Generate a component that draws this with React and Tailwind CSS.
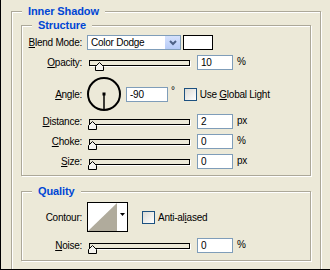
import React from 'react';

const font = { fontFamily: '"Liberation Sans", Arial, sans-serif' };

function U({ children }) {
  return <span className="underline underline-offset-[1px]">{children}</span>;
}

function Label({ children }) {
  return <div className="w-[60px] shrink-0 text-right whitespace-nowrap">{children}</div>;
}

function Thumb() {
  return (
    <svg width="9" height="9" viewBox="0 0 9 9" className="block">
      <path d="M4.5 0.5 L8.5 4.5 L8.5 8.5 L0.5 8.5 L0.5 4.5 Z" fill="#f4f3ee" stroke="#000" strokeWidth="1" />
    </svg>
  );
}

function Slider({ pos }) {
  return (
    <div className="relative w-[104px] h-[15px] pl-[3px] flex items-center">
      <div className="w-[101px] h-[6px] border border-black bg-[#ece9d8] shadow-[1px_1px_0_#fff]" />
      <div className="absolute top-[7px]" style={{ left: pos }}>
        <Thumb />
      </div>
    </div>
  );
}

function NumBox({ value, w = 'w-[36px]' }) {
  return (
    <div className={`${w} h-[15px] border border-[#7f9db9] bg-white pl-[3px] leading-[13px]`}>{value}</div>
  );
}

function Checkbox() {
  return (
    <div className="w-[13px] h-[13px] border border-[#1c5180] bg-gradient-to-br from-[#dcdbd5] to-white shrink-0" />
  );
}

function Group({ title, className, children }) {
  return (
    <div className={`relative border border-[#aca899] shadow-[inset_1px_1px_0_#fff,1px_1px_0_#fff] ${className}`}>
      <div className="absolute -top-[7px] left-[10px] px-[6px] bg-[#ece9d8] text-[11px] leading-[13px] font-bold text-[#0046d5] tracking-[-0.1px]">
        {title}
      </div>
      {children}
    </div>
  );
}

function SliderRow({ label, value, unit, pos, className }) {
  return (
    <div className={`flex items-center h-[15px] ${className}`}>
      <Label>{label}</Label>
      <div className="ml-[4px]">
        <Slider pos={pos} />
      </div>
      <div className="ml-[7px]">
        <NumBox value={value} />
      </div>
      <div className="ml-[4px] self-start mt-[1px] leading-[11px]">{unit}</div>
    </div>
  );
}

export default function App() {
  return (
    <div
      className="w-[330px] h-[270px] bg-[#ece9d8] border-l border-b border-black overflow-hidden text-[10px] tracking-[-0.25px] text-black"
      style={font}
    >
      <Group title="Inner Shadow" className="ml-[10px] mt-[11px] w-[310px] h-[280px]">
        <div className="pl-[9px] pt-[13px]">
          <Group title="Structure" className="w-[290px] h-[151px]">
            <div className="flex items-center h-[15px] mt-[9px]">
              <Label>
                <U>B</U>lend Mode:
              </Label>
              <div className="ml-[5px] w-[94px] h-[15px] border border-[#7f9db9] bg-white flex items-center">
                <div className="flex-1 pl-[3px] leading-[13px]">Color Dodge</div>
                <div className="w-[16px] h-[13px] bg-gradient-to-b from-[#d6e2fd] to-[#b6cbf7] border-l border-white flex items-center justify-center">
                  <svg width="8" height="6" viewBox="0 0 8 6">
                    <path d="M1 1 L4 4 L7 1" fill="none" stroke="#4d6185" strokeWidth="2" />
                  </svg>
                </div>
              </div>
              <div className="ml-[2px] w-[30px] h-[15px] border border-black bg-white" />
            </div>

            <SliderRow label={<><U>O</U>pacity:</>} value="10" unit="%" pos="9px" className="mt-[5px]" />

            <div className="flex items-center h-[34px] mt-[7px]">
              <Label>
                <U>A</U>ngle:
              </Label>
              <div className="ml-[5px]">
                <svg width="34" height="34" viewBox="0 0 34 34" className="block">
                  <circle cx="17" cy="17" r="16" fill="none" stroke="#000" strokeWidth="2" />
                  <rect x="15.5" y="15.5" width="3" height="3" fill="#000" />
                  <line x1="17" y1="17" x2="17" y2="33" stroke="#000" strokeWidth="1.5" />
                </svg>
              </div>
              <div className="ml-[5px]">
                <NumBox value="-90" w="w-[42px]" />
              </div>
              <div className="ml-[3px] self-start mt-[9px] leading-[10px]">°</div>
              <div className="ml-[9px]">
                <Checkbox />
              </div>
              <div className="ml-[3px]">
                Use <U>G</U>lobal Light
              </div>
            </div>

            <SliderRow label={<><U>D</U>istance:</>} value="2" unit="px" pos="2px" className="mt-[3px]" />
            <SliderRow label={<><U>C</U>hoke:</>} value="0" unit="%" pos="2px" className="mt-[5px]" />
            <SliderRow label={<><U>S</U>ize:</>} value="0" unit="px" pos="2px" className="mt-[5px]" />
          </Group>

          <Group title="Quality" className="w-[290px] h-[70px] mt-[15px]">
            <div className="flex items-center h-[30px] mt-[10px]">
              <Label>Contour:</Label>
              <div className="ml-[5px] w-[41px] h-[30px] border border-black bg-white flex">
                <svg width="29" height="28" viewBox="0 0 29 28" className="block">
                  <polygon points="0,28 29,0 29,28" fill="#b0ab9c" />
                </svg>
                <div className="flex-1 flex justify-center pt-[10px]">
                  <svg width="5" height="3" viewBox="0 0 5 3" className="block">
                    <polygon points="0,0 5,0 2.5,3" fill="#000" />
                  </svg>
                </div>
              </div>
              <div className="ml-[14px]">
                <Checkbox />
              </div>
              <div className="ml-[3px]">
                Anti-al<U>i</U>ased
              </div>
            </div>
            <SliderRow label={<><U>N</U>oise:</>} value="0" unit="%" pos="2px" className="mt-[6px]" />
          </Group>
        </div>
      </Group>
    </div>
  );
}
